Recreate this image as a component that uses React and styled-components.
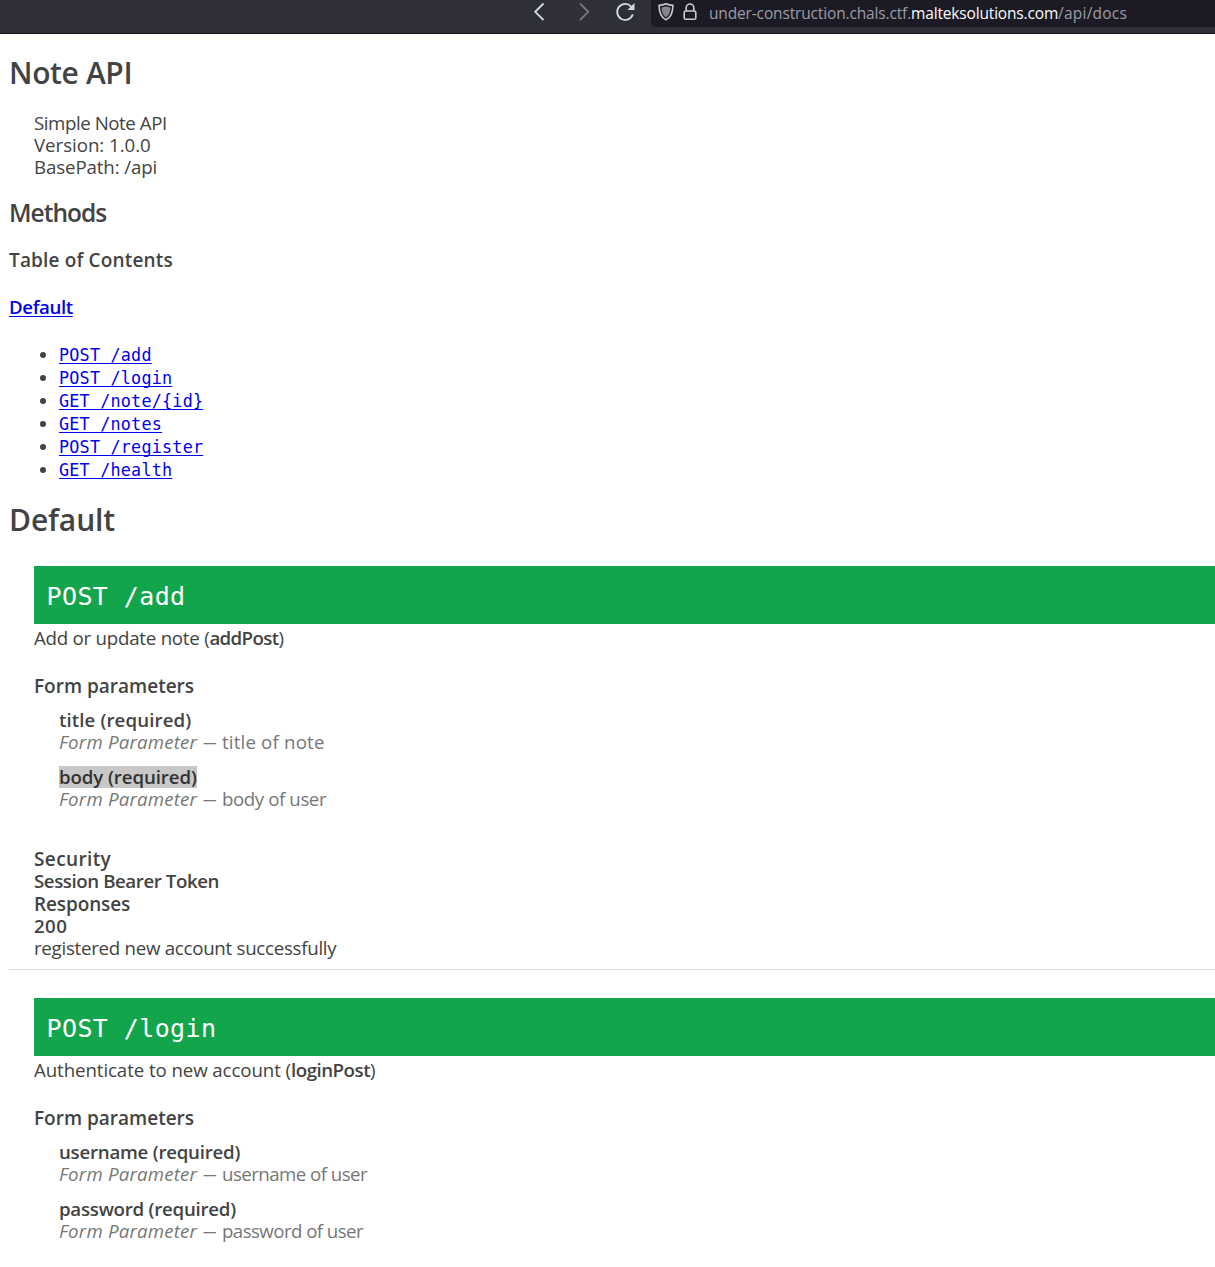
import React from "react";
import styled, { createGlobalStyle } from "styled-components";

const GlobalStyle = createGlobalStyle`
  * { box-sizing: border-box; }
  html, body { margin: 0; background: #fff; }
  body {
    height: 1267px;
    overflow: hidden;
    color: #434343;
    font: 400 18.7px/22px "Open Sans", "Noto Sans", sans-serif;
    font-variant-ligatures: none;
  }
`;

const mono = `"DejaVu Sans Mono", "Liberation Mono", monospace`;

const Toolbar = styled.header`
  display: flex;
  align-items: flex-start;
  height: 34px;
  padding-left: 530px;
  background: #2f2f39;
  border-bottom: 1px solid #1d131d;
`;

const NavIcon = styled.svg`
  flex: none;
  width: 20px;
  height: 24px;
  margin-right: ${(p) => p.$gap}px;
  fill: none;
  stroke: ${(p) => (p.$dim ? "#777880" : "#d5dae2")};
  stroke-width: 1.8;
`;

const AddressBar = styled.div`
  display: flex;
  flex: 1;
  height: 27px;
  padding-left: 7px;
  background: #1c1b25;
  border-bottom-left-radius: 5px;
`;

const BarIcon = styled.svg`
  flex: none;
  width: 16px;
  height: 24px;
  margin-right: ${(p) => p.$gap}px;
  fill: none;
  stroke: #c6cad2;
  stroke-width: 1.6;
`;

const Url = styled.div`
  font-size: 15.5px;
  line-height: 27px;
  color: #9c9ca6;
  white-space: nowrap;
`;

const Text = styled.span`
  letter-spacing: ${(p) => p.$ls || 0}px;
`;

const Host = styled(Text)`
  color: #fbfbfe;
`;

const Page = styled.main`
  padding: 21px 0 0 9px;
  white-space: nowrap;
`;

const Title = styled.h1`
  margin: 0;
  font-size: 30px;
  font-weight: 600;
  line-height: 36px;
`;

const AppInfo = styled.div`
  padding: 21px 0 21px 25px;
`;

const SectionTitle = styled.h2`
  margin: 0 0 22px;
  font-size: 24.5px;
  font-weight: 600;
  line-height: 28px;
`;

const Heading = styled.h3`
  margin: 0;
  font-size: 19px;
  font-weight: 600;
  line-height: 22px;
`;

const GroupLink = styled.h4`
  margin: 25px 0 26px;
  font-size: 18.7px;
  font-weight: 600;
  line-height: 22px;
`;

const Link = styled.a`
  color: #0000ee;
  text-decoration: underline;
  text-decoration-thickness: 1px;
  text-underline-offset: 2px;
  text-decoration-skip-ink: ${(p) => (p.$solid ? "none" : "auto")};
`;

const MethodList = styled.ul`
  margin: 0 0 20px;
  padding: 0 0 0 31px;
  list-style: none;
`;

const MethodItem = styled.li`
  display: flex;
  align-items: center;
  gap: 13px;
  height: 23px;
  font: 400 16.8px/23px ${mono};
  letter-spacing: 0.2px;

  &::before {
    content: "";
    width: 6px;
    height: 6px;
    margin-top: -1px;
    border-radius: 50%;
    background: #434343;
  }
`;

const Operation = styled.section`
  padding: 28px 0 10px 25px;
`;

const Banner = styled.div`
  height: 58px;
  margin-bottom: 3px;
  padding-left: 12.5px;
  background: #12a54b;
  color: #fff;
  font: 400 25px/62px ${mono};
  letter-spacing: 0.4px;
`;

const Params = styled.dl`
  margin: 12px 0 0;
  padding-left: 25px;
`;

const Param = styled.div`
  margin-bottom: 13px;
`;

const ParamName = styled.dt`
  font-weight: 600;
`;

const Mark = styled(Text)`
  display: inline-block;
  height: 22px;
  background: ${(p) => (p.$selected ? "#c8c8c8" : "transparent")};
  color: ${(p) => (p.$selected ? "#323232" : "inherit")};
`;

const ParamInfo = styled.dd`
  display: flex;
  gap: 6px;
  margin: 0;
  color: #777;
`;

const Kind = styled.em`
  width: 138px;
  letter-spacing: 0.18px;
`;

const Dash = styled.span`
  width: 13px;
  transform: scaleX(0.72);
  transform-origin: 0 50%;
`;

const Strong = styled.div`
  font-weight: 600;
`;

const Divider = styled.hr`
  height: 1px;
  margin: 0;
  border: 0;
  background: #ddd;
`;

const Summary = styled.div`
  margin-bottom: 26px;
`;

const Bold = styled.b`
  font-weight: 600;
  letter-spacing: ${(p) => p.$ls}px;
`;

const Results = styled.div`
  padding-top: 25px;
`;

const HeadingRow = styled(Heading)`
  margin-top: ${(p) => p.$top || 0}px;
`;

const methods = ["POST /add", "POST /login", "GET /note/{id}", "GET /notes", "POST /register", "GET /health"];

const operations = [
  {
    path: "POST /add",
    summary: ["Add or update note (", -0.24],
    id: ["addPost", -0.64],
    params: [
      { name: ["title (required)", 0.1], info: ["title of note", 0.17] },
      { name: ["body (required)", -0.11], info: ["body of user", -0.42] },
    ],
    secured: true,
  },
  {
    path: "POST /login",
    summary: ["Authenticate to new account (", -0.09],
    id: ["loginPost", -0.49],
    params: [
      { name: ["username (required)", -0.25], info: ["username of user", -0.55] },
      { name: ["password (required)", -0.26], info: ["password of user", -0.57] },
    ],
  },
];

function OperationDoc({ op, selected }) {
  return (
    <Operation>
      <Banner>{op.path}</Banner>
      <Summary>
        <Text $ls={op.summary[1]}>{op.summary[0]}</Text>
        <Bold $ls={op.id[1]}>{op.id[0]}</Bold>)
      </Summary>
      <Heading>Form parameters</Heading>
      <Params>
        {op.params.map((p) => (
          <Param key={p.name[0]}>
            <ParamName><Mark $ls={p.name[1]} $selected={p.name[0] === selected}>{p.name[0]}</Mark></ParamName>
            <ParamInfo>
              <Kind>Form Parameter</Kind>
              <Dash>—</Dash>
              <Text $ls={p.info[1]}>{p.info[0]}</Text>
            </ParamInfo>
          </Param>
        ))}
      </Params>
      {op.secured && (
        <Results>
          <HeadingRow><Text $ls={0.38}>Security</Text></HeadingRow>
          <Strong><Text $ls={-0.43}>Session Bearer Token</Text></Strong>
          <HeadingRow $top={1}><Text $ls={-0.12}>Responses</Text></HeadingRow>
          <Strong><Text $ls={0.4}>200</Text></Strong>
          <div><Text $ls={-0.27}>registered new account successfully</Text></div>
        </Results>
      )}
    </Operation>
  );
}

export default function App() {
  return (
    <>
      <GlobalStyle />
      <Toolbar>
        <NavIcon $gap={25} viewBox="0 0 20 24"><path d="M13.5 3.5 5.2 11.8l8.3 8.2" /></NavIcon>
        <NavIcon $gap={20} $dim viewBox="0 0 20 24"><path d="M5 3.5l8.3 8.3L5 20" /></NavIcon>
        <NavIcon $gap={16} viewBox="0 0 20 24">
          <path d="M17.8 14.4A8 8 0 1 1 16.2 6.6" />
          <path d="M19.5 3v7h-7z" fill="#d5dae2" stroke="none" />
        </NavIcon>
        <AddressBar>
          <BarIcon $gap={8} viewBox="0 0 16 24">
            <path d="M8 3.8c2 .9 4.3 1.5 6.9 1.6 0 6.6-1.6 11.6-6.9 14.5C2.7 17 1.1 12 1.1 5.4 3.7 5.3 6 4.7 8 3.8z" />
            <path d="M8 6.3c1.4.6 2.9 1 4.5 1.2-.2 4.6-1.4 7.8-4.5 9.9C4.9 15.3 3.7 12.1 3.5 7.5 5.1 7.3 6.6 6.9 8 6.3z" fill="#85868e" stroke="none" />
          </BarIcon>
          <BarIcon $gap={11} viewBox="0 0 16 24">
            <rect x="2.2" y="11" width="11.6" height="8.2" rx="1.5" />
            <path d="M4.2 11V7.8a3.8 3.8 0 0 1 7.6 0V11" />
          </BarIcon>
          <Url>
            <Text $ls={-0.15}>under-construction.chals.ctf.</Text>
            <Host $ls={-0.17}>malteksolutions.com</Host>
            <Text $ls={0.22}>/api/docs</Text>
          </Url>
        </AddressBar>
      </Toolbar>
      <Page>
        <Title><Text $ls={-0.37}>Note API</Text></Title>
        <AppInfo>
          <div><Text $ls={-0.44}>Simple Note API</Text></div>
          <div><Text $ls={-0.04}>Version: 1.0.0</Text></div>
          <div><Text $ls={-0.12}>BasePath: /api</Text></div>
        </AppInfo>
        <SectionTitle><Text $ls={-1}>Methods</Text></SectionTitle>
        <Heading><Text $ls={0.16}>Table of Contents</Text></Heading>
        <GroupLink><Link><Text $ls={-0.4}>Default</Text></Link></GroupLink>
        <MethodList>
          {methods.map((m) => (
            <MethodItem key={m}><Link $solid>{m}</Link></MethodItem>
          ))}
        </MethodList>
        <Title><Text $ls={-0.1}>Default</Text></Title>
        <OperationDoc op={operations[0]} selected="body (required)" />
        <Divider />
        <OperationDoc op={operations[1]} />
      </Page>
    </>
  );
}
